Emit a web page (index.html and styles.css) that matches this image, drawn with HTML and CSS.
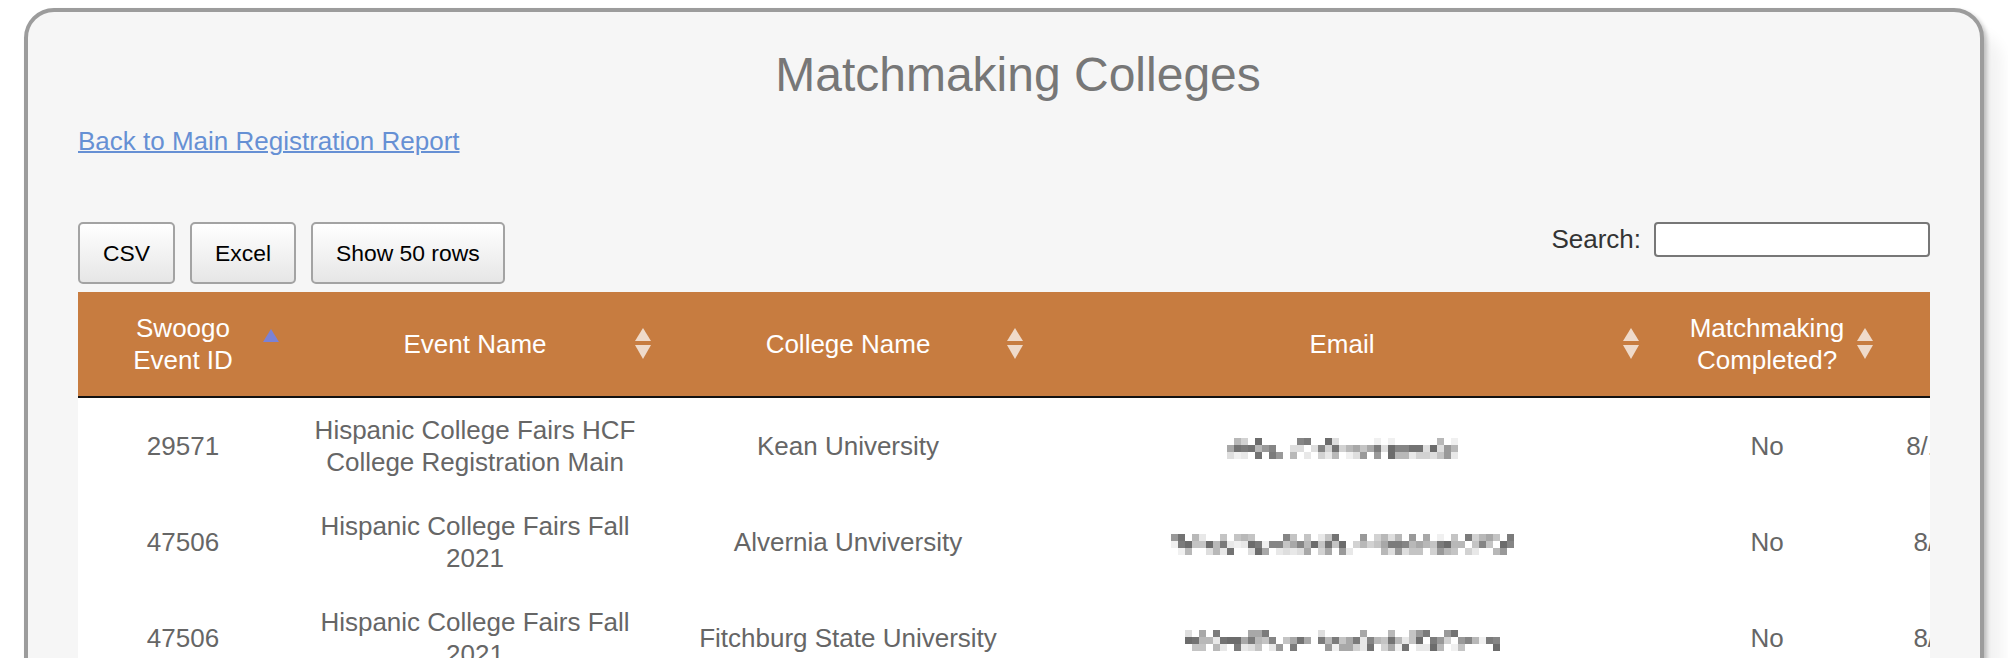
FILE: index.html
```html
<!DOCTYPE html>
<html lang="en">
<head>
<meta charset="utf-8">
<title>Matchmaking Colleges</title>
<link rel="stylesheet" href="styles.css">
</head>
<body>
<div class="card">
  <h1 class="title">Matchmaking Colleges</h1>
  <div class="back"><a href="#">Back to Main Registration Report</a></div>
  <div class="toolbar">
    <div class="buttons">
      <button class="btn" type="button">CSV</button>
      <button class="btn" type="button">Excel</button>
      <button class="btn" type="button">Show 50 rows</button>
    </div>
    <label class="search">Search:<input type="search" class="search-input"></label>
  </div>
  <div class="scroll">
    <table class="grid">
      <colgroup>
        <col class="c-id"><col class="c-event"><col class="c-college"><col class="c-email"><col class="c-done"><col class="c-date">
      </colgroup>
      <thead>
        <tr>
          <th class="sort-asc">Swoogo Event ID</th>
          <th>Event Name</th>
          <th>College Name</th>
          <th>Email</th>
          <th>Matchmaking Completed?</th>
          <th>Date</th>
        </tr>
      </thead>
      <tbody>
        <tr>
          <td>29571</td>
          <td>Hispanic College Fairs HCF College Registration Main</td>
          <td>Kean University</td>
          <td><span class="mosaic" data-cols="33" data-seed="11"></span></td>
          <td>No</td>
          <td>8/17/2021</td>
        </tr>
        <tr>
          <td>47506</td>
          <td>Hispanic College Fairs Fall 2021</td>
          <td>Alvernia Unviversity</td>
          <td><span class="mosaic" data-cols="49" data-seed="47"></span></td>
          <td>No</td>
          <td>8/5/2021</td>
        </tr>
        <tr>
          <td>47506</td>
          <td>Hispanic College Fairs Fall 2021</td>
          <td>Fitchburg State University</td>
          <td><span class="mosaic" data-cols="45" data-seed="93"></span></td>
          <td>No</td>
          <td>8/5/2021</td>
        </tr>
      </tbody>
    </table>
  </div>
</div>
<script src="script.js"></script>
</body>
</html>
```

FILE: styles.css
```css
* { box-sizing: border-box; }
html, body { margin: 0; background: #fff; }
body { font-family: "Liberation Sans", Arial, Helvetica, sans-serif; }

.card {
  margin: 8px 24px 0;
  border: 4px solid #9c9c9c;
  border-radius: 30px;
  background: #f6f6f6;
  padding: 35px 50px 60px;
  box-shadow: 3px 3px 4px rgba(0,0,0,.22), 18px 24px 14px rgba(0,0,0,.05);
}

.title {
  margin: 0;
  padding-left: 28px;
  font-size: 48px;
  line-height: 56px;
  font-weight: normal;
  color: #777;
  text-align: center;
}

.back { margin-top: 23px; font-size: 26px; line-height: 30px; }
.back a { color: #6690d4; text-decoration: underline; text-decoration-thickness: 2px; }

.toolbar {
  margin-top: 66px;
  display: flex;
  justify-content: space-between;
  align-items: flex-start;
}
.buttons { display: flex; gap: 15px; }
.btn {
  height: 62px;
  padding: 0 23px;
  border: 2px solid #a3a3a3;
  border-radius: 5px;
  background: linear-gradient(#ffffff, #e6e6e6);
  font-family: inherit;
  font-size: 22.88px;
  color: #000;
}
.search {
  display: flex;
  align-items: center;
  gap: 13px;
  font-size: 26px;
  color: #333;
}
.search-input {
  width: 276px;
  height: 35px;
  border: 2px solid #777;
  border-radius: 4px;
  background: #fff;
}

.scroll { margin-top: 8px; overflow: hidden; }
.grid {
  border-collapse: separate;
  border-spacing: 0;
  table-layout: fixed;
  width: 1966px;
  font-size: 26px;
  line-height: 32px;
}
.c-id { width: 210px; }
.c-event { width: 374px; }
.c-college { width: 372px; }
.c-email { width: 616px; }
.c-done { width: 234px; }
.c-date { width: 160px; }

.grid th {
  position: relative;
  background: #c77c40;
  color: #fff;
  font-weight: normal;
  padding: 20px 30px;
  text-align: center;
  border-bottom: 2px solid #111;
}
.grid th::before {
  content: "";
  position: absolute;
  right: 11px;
  top: calc(50% - 16px);
  border-left: 8px solid transparent;
  border-right: 8px solid transparent;
  border-bottom: 13px solid rgba(255,255,255,.72);
}
.grid th::after {
  content: "";
  position: absolute;
  right: 11px;
  top: calc(50% + 1px);
  border-left: 8px solid transparent;
  border-right: 8px solid transparent;
  border-top: 14px solid rgba(255,255,255,.72);
}
.grid th.sort-asc::before {
  right: 9px;
  top: calc(50% - 15px);
  border-bottom-color: #7b82d6;
}
.grid th.sort-asc::after { display: none; }

.grid td {
  background: #fff;
  color: #666;
  padding: 16px 20px;
  text-align: center;
}
.mosaic { display: inline-block; vertical-align: middle; line-height: 0; }
.mosaic svg { display: block; }
```

FILE: script.js
```js
(function () {
  var dark = ['#6c6c6c', '#737373', '#7b7b7b', '#858585'];
  var mid = ['#999999', '#a8a8a8', '#b8b8b8', '#c4c4c4'];
  var light = ['#d2d2d2', '#dedede', '#e8e8e8', '#f0f0f0'];
  var els = document.querySelectorAll('.mosaic');
  for (var i = 0; i < els.length; i++) {
    var el = els[i];
    var cols = +el.getAttribute('data-cols');
    var s = +el.getAttribute('data-seed');
    var r = function () { s = (s * 16807) % 2147483647; return (s - 1) / 2147483646; };
    for (var k = 0; k < 5; k++) r();
    var pick = function (a) { return a[Math.floor(r() * a.length)]; };
    var B = 7, H = 21, parts = [];
    for (var c = 0; c < cols; c++) {
      for (var row = 0; row < 3; row++) {
        var v = r(), col = null;
        if (row === 0) {
          if (v < 0.12) col = pick(dark); else if (v < 0.3) col = pick(mid); else if (v < 0.4) col = pick(light);
        } else if (row === 1) {
          if (v < 0.5) col = pick(dark); else if (v < 0.8) col = pick(mid); else if (v < 0.93) col = pick(light);
        } else {
          if (v < 0.1) col = pick(dark); else if (v < 0.35) col = pick(mid); else if (v < 0.6) col = pick(light);
        }
        if (col) parts.push('<rect x="' + c * B + '" y="' + row * B + '" width="' + B + '" height="' + B + '" fill="' + col + '"/>');
      }
    }
    el.innerHTML = '<svg xmlns="http://www.w3.org/2000/svg" width="' + cols * B + '" height="' + H + '" viewBox="0 0 ' + cols * B + ' ' + H + '" shape-rendering="crispEdges">' + parts.join('') + '</svg>';
  }
})();
```
